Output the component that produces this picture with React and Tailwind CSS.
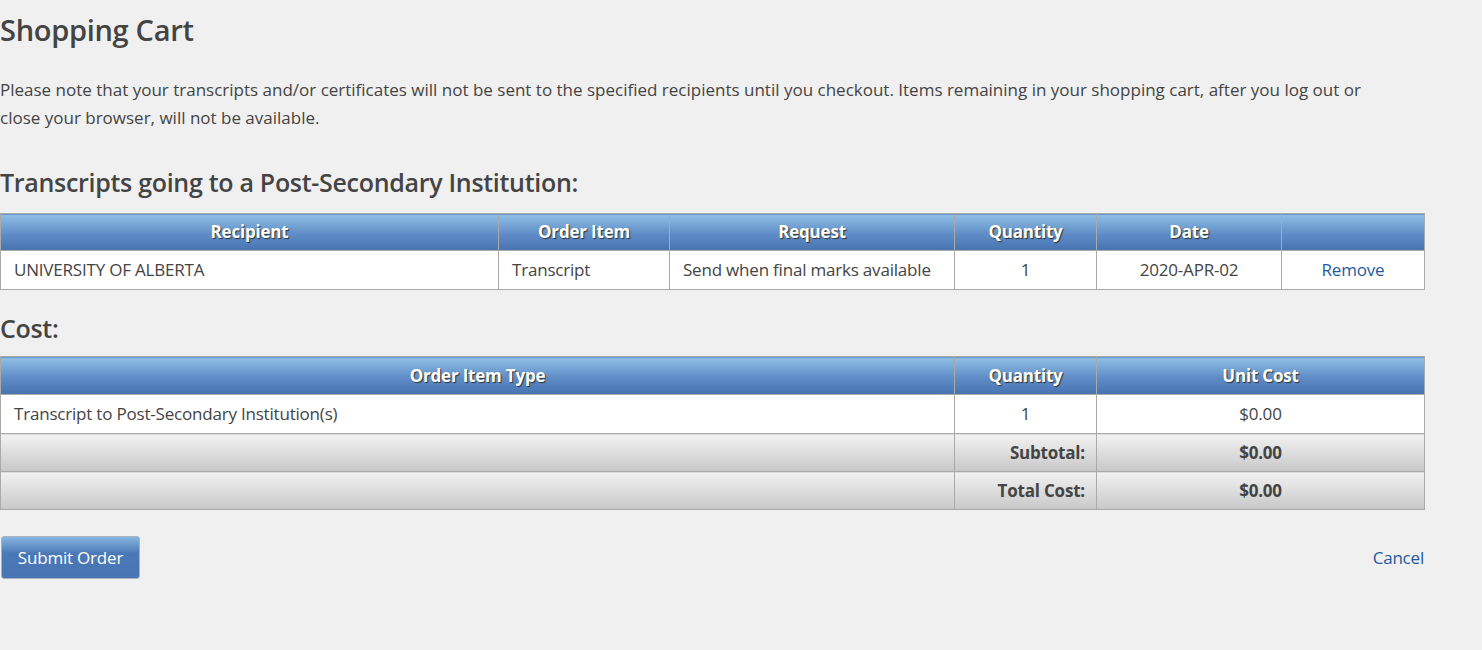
const headCell =
  "border border-[#aaaaaa] bg-[linear-gradient(to_bottom,#8fc0e6,#5f8cc6_55%,#4873b2)] text-center font-bold text-white [text-shadow:1px_1px_1px_#333] p-0";
const bodyCell = "border border-[#aaaaaa] bg-white h-[38px] px-[13px] py-0";
const greyCell =
  "border border-[#aaaaaa] bg-[linear-gradient(to_bottom,#f2f2f2,#c8c8c8)] h-[38px] px-[11px] py-0 font-bold";

const orders = [
  {
    recipient: "UNIVERSITY OF ALBERTA",
    item: "Transcript",
    request: "Send when final marks available",
    quantity: 1,
    date: "2020-APR-02",
  },
];

const App = () => {
  return (
    <div className="min-h-[650px] bg-[#f0f0f0] text-[#444444] font-['Open_Sans',sans-serif] text-[17px] tracking-[-0.2px]">
      <h1 className="pt-[11px] text-[29px] font-semibold leading-[38px] tracking-[-0.3px]">Shopping Cart</h1>

      <p className="mt-[27px] w-[1390px] leading-[28px] tracking-normal">
        Please note that your transcripts and/or certificates will not be sent to the specified recipients until you
        checkout. Items remaining in your shopping cart, after you log out or close your browser, will not be available.
      </p>

      <h2 className="mt-[34px] text-[25px] font-semibold leading-[32px] tracking-[-0.3px]">
        Transcripts going to a Post-Secondary Institution:
      </h2>

      <table className="mt-[15px] w-[1424px] table-fixed border-collapse">
        <colgroup>
          <col className="w-[498px]" />
          <col className="w-[171px]" />
          <col className="w-[285px]" />
          <col className="w-[142px]" />
          <col className="w-[185px]" />
          <col className="w-[143px]" />
        </colgroup>
        <thead>
          <tr>
            <th className={`${headCell} h-[37px]`}>Recipient</th>
            <th className={`${headCell} h-[37px]`}>Order Item</th>
            <th className={`${headCell} h-[37px]`}>Request</th>
            <th className={`${headCell} h-[37px]`}>Quantity</th>
            <th className={`${headCell} h-[37px]`}>Date</th>
            <th className={`${headCell} h-[37px]`}></th>
          </tr>
        </thead>
        <tbody>
          {orders.map((order) => (
            <tr key={order.recipient}>
              <td className={`${bodyCell} h-[39px]`}>{order.recipient}</td>
              <td className={`${bodyCell} h-[39px]`}>{order.item}</td>
              <td className={`${bodyCell} h-[39px]`}>{order.request}</td>
              <td className={`${bodyCell} h-[39px] text-center`}>{order.quantity}</td>
              <td className={`${bodyCell} h-[39px] text-center`}>{order.date}</td>
              <td className={`${bodyCell} h-[39px] text-center`}>
                <a href="#" className="text-[#1f5a9e]">Remove</a>
              </td>
            </tr>
          ))}
        </tbody>
      </table>

      <h2 className="mt-[22px] text-[25px] font-semibold leading-[32px] tracking-[-0.3px]">Cost:</h2>

      <table className="mt-[12px] w-[1424px] table-fixed border-collapse">
        <colgroup>
          <col className="w-[954px]" />
          <col className="w-[142px]" />
          <col className="w-[328px]" />
        </colgroup>
        <thead>
          <tr>
            <th className={`${headCell} h-[38px]`}>Order Item Type</th>
            <th className={`${headCell} h-[38px]`}>Quantity</th>
            <th className={`${headCell} h-[38px]`}>Unit Cost</th>
          </tr>
        </thead>
        <tbody>
          <tr>
            <td className={`${bodyCell} h-[39px]`}>Transcript to Post-Secondary Institution(s)</td>
            <td className={`${bodyCell} h-[39px] text-center`}>1</td>
            <td className={`${bodyCell} h-[39px] text-center`}>$0.00</td>
          </tr>
          <tr>
            <td className={greyCell}></td>
            <td className={`${greyCell} text-right`}>Subtotal:</td>
            <td className={`${greyCell} text-center`}>$0.00</td>
          </tr>
          <tr>
            <td className={greyCell}></td>
            <td className={`${greyCell} text-right`}>Total Cost:</td>
            <td className={`${greyCell} text-center`}>$0.00</td>
          </tr>
        </tbody>
      </table>

      <div className="mt-[26px] flex w-[1424px] items-center justify-between">
        <button className="ml-[1px] h-[43px] w-[139px] rounded-[3px] border border-[#a9b3c0] bg-[linear-gradient(to_bottom,#86b6e0,#4b78b6_40%,#4874b3)] text-[17px] tracking-[-0.2px] text-white">
          Submit Order
        </button>
        <a href="#" className="text-[#1f5a9e] text-[17px]">Cancel</a>
      </div>
    </div>
  );
};

export default App;
